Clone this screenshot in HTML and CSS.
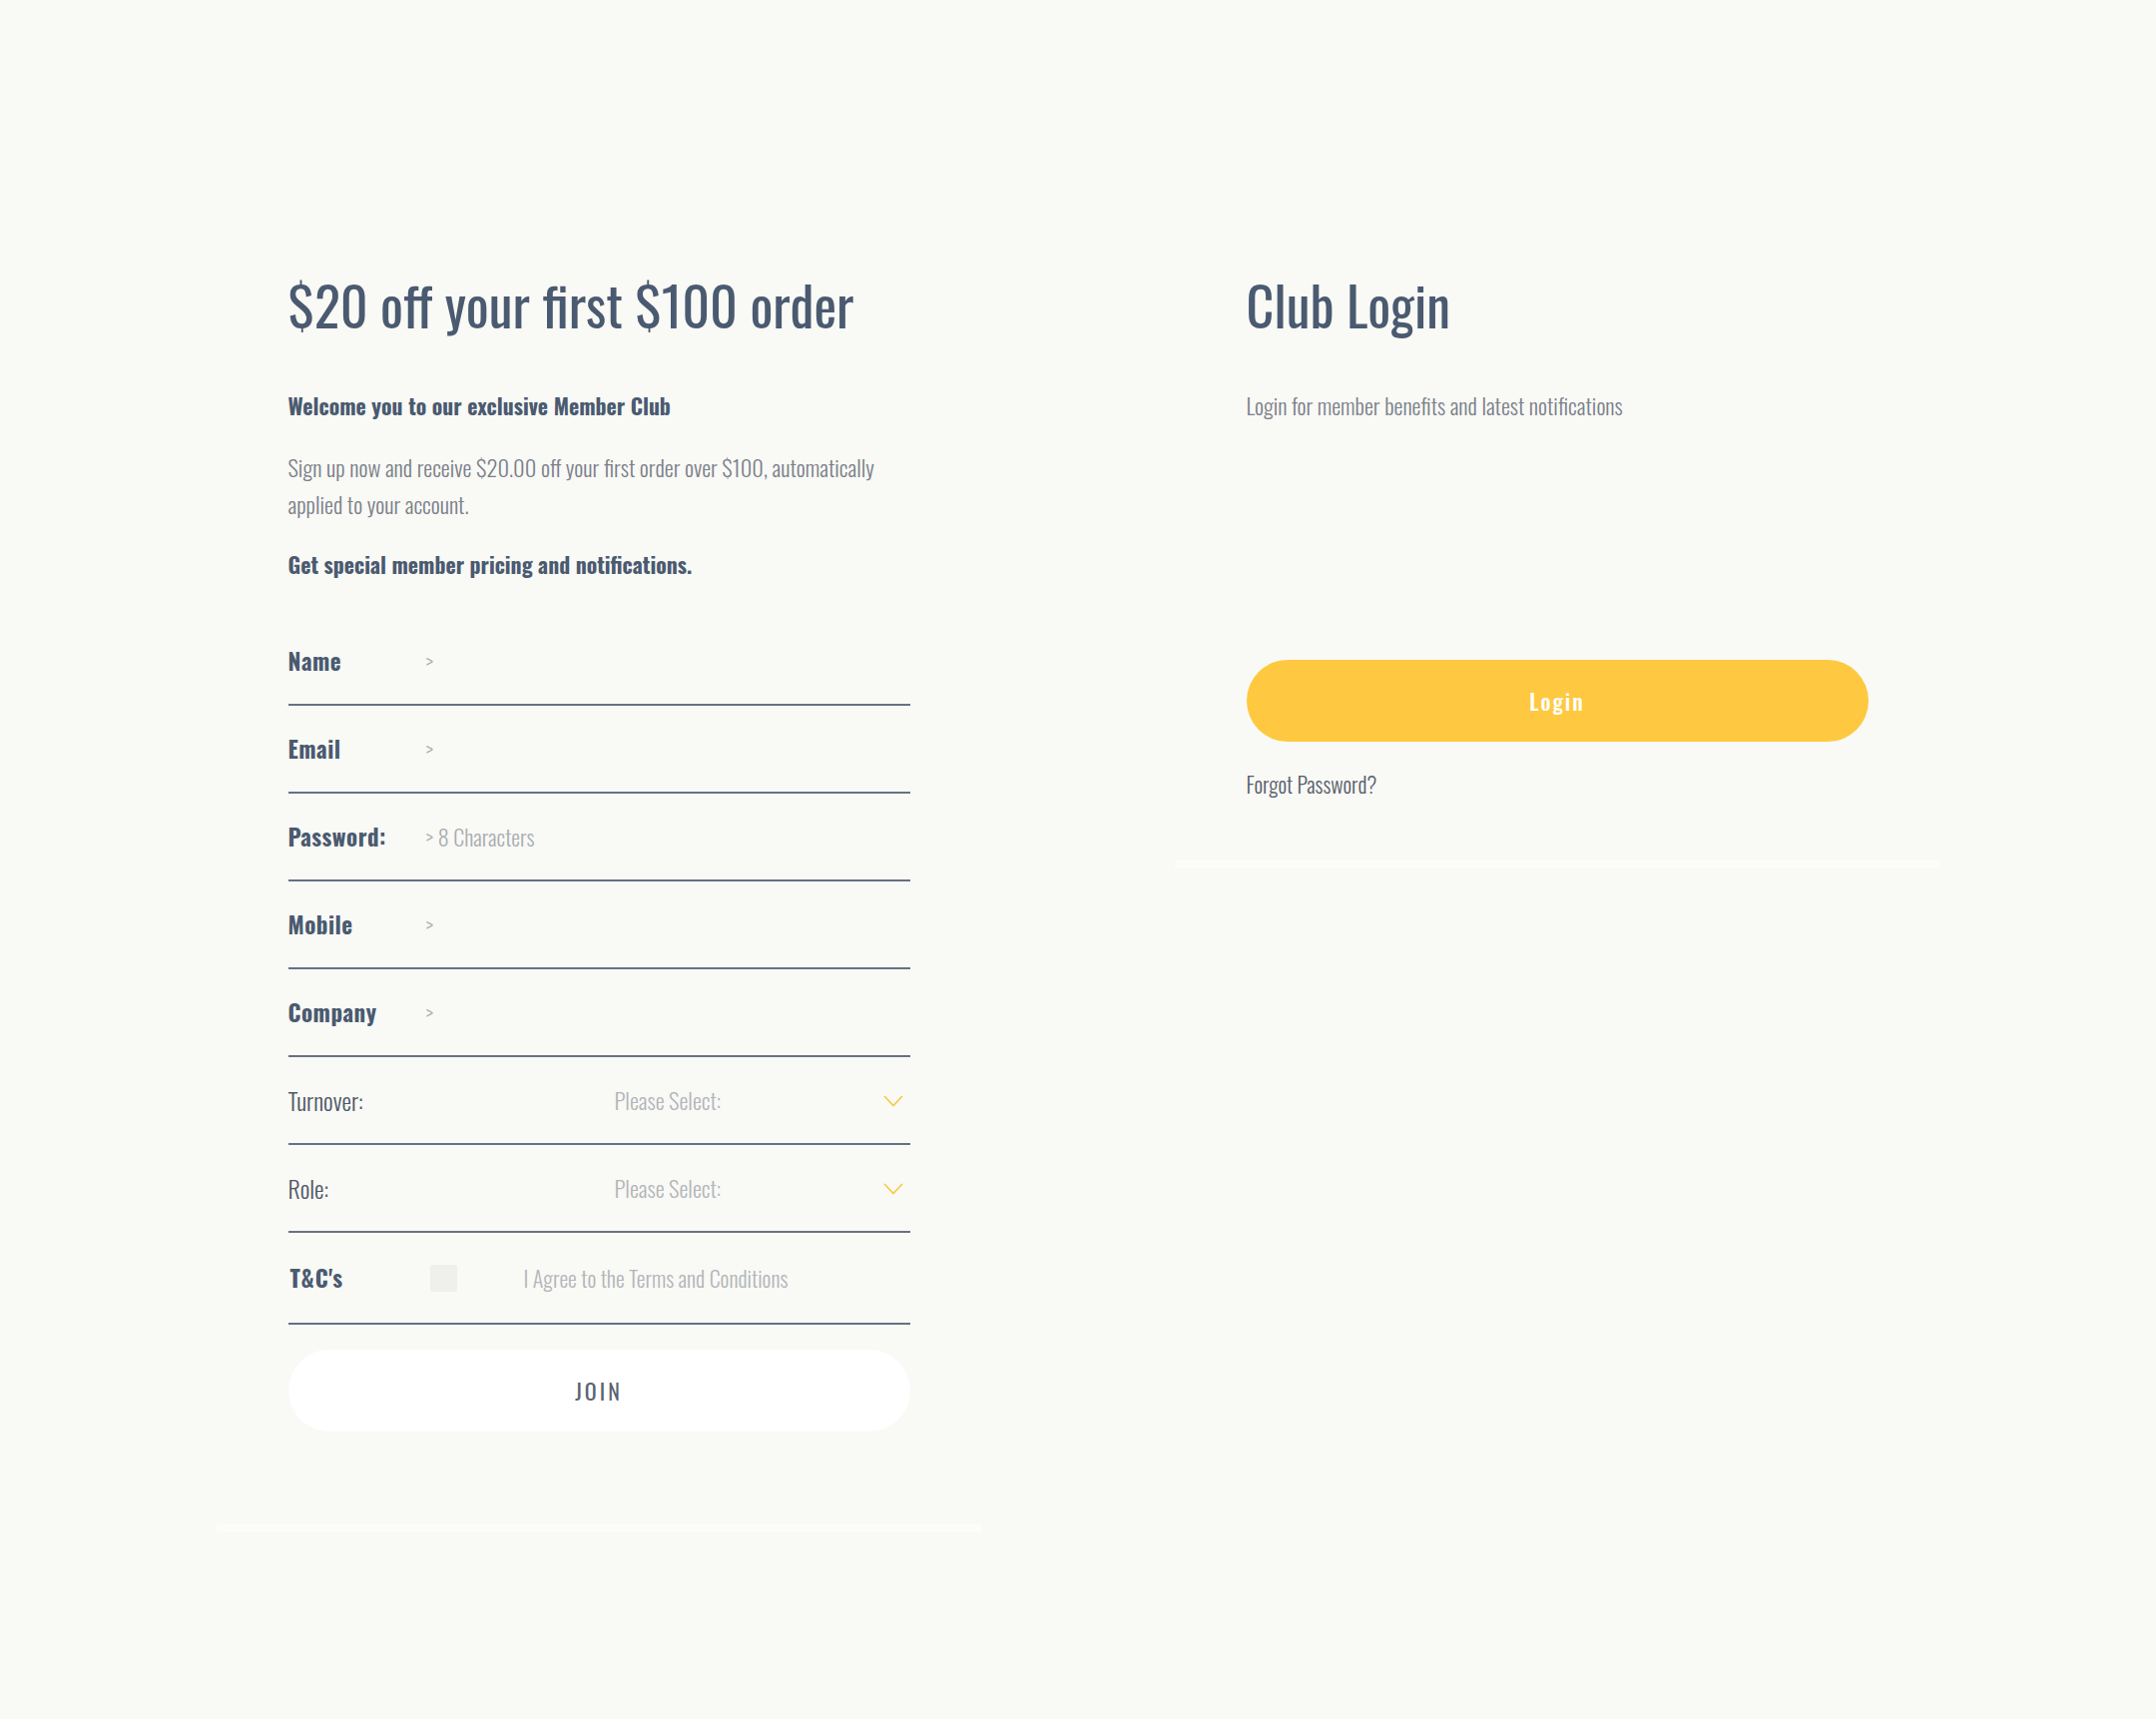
FILE: index.html
```
<!DOCTYPE html>
<html lang="en">
<head>
<meta charset="utf-8">
<title>Member Club</title>
<link rel="stylesheet" href="styles.css">
</head>
<body>
<main class="page">
  <section class="card card-join">
    <h1 class="title">$20 off your first $100 order</h1>
    <p class="lead">Welcome you to our exclusive Member Club</p>
    <p class="text">Sign up now and receive $20.00 off your first order over $100, automatically applied to your account.</p>
    <p class="lead lead-2">Get special member pricing and notifications.</p>

    <form class="form">
      <label class="row">
        <span class="label">Name</span>
        <input class="field" type="text" placeholder="&gt;">
      </label>
      <label class="row">
        <span class="label">Email</span>
        <input class="field" type="email" placeholder="&gt;">
      </label>
      <label class="row">
        <span class="label">Password:</span>
        <input class="field" type="password" placeholder="&gt; 8 Characters">
      </label>
      <label class="row">
        <span class="label">Mobile</span>
        <input class="field" type="tel" placeholder="&gt;">
      </label>
      <label class="row">
        <span class="label">Company</span>
        <input class="field" type="text" placeholder="&gt;">
      </label>
      <label class="row row-select">
        <span class="label label-light">Turnover:</span>
        <span class="select-wrap">
          <select class="select"><option>Please Select:</option></select>
          <svg class="caret" viewBox="0 0 20 12" width="20" height="12"><polyline points="1,1 10,10.5 19,1" fill="none" stroke="#f6c945" stroke-width="1.6"/></svg>
        </span>
      </label>
      <label class="row row-select">
        <span class="label label-light">Role:</span>
        <span class="select-wrap">
          <select class="select"><option>Please Select:</option></select>
          <svg class="caret" viewBox="0 0 20 12" width="20" height="12"><polyline points="1,1 10,10.5 19,1" fill="none" stroke="#f6c945" stroke-width="1.6"/></svg>
        </span>
      </label>
      <label class="row row-terms">
        <span class="label label-terms">T&amp;C's</span>
        <input class="check" type="checkbox">
        <span class="agree">I Agree to the Terms and Conditions</span>
      </label>
      <button class="btn btn-join" type="button">JOIN</button>
    </form>
  </section>

  <section class="card card-login">
    <h1 class="title">Club Login</h1>
    <p class="text text-login">Login for member benefits and latest notifications</p>
    <button class="btn btn-login" type="button">Login</button>
    <a class="forgot" href="#">Forgot Password?</a>
  </section>
</main>
</body>
</html>
```
FILE: styles.css
```
* { box-sizing: border-box; }

html, body {
  margin: 0;
  background: #f9f9f5;
}

body {
  font-family: "Oswald", "Open Sans", sans-serif;
  color: #4a5a70;
}

.page {
  display: flex;
  justify-content: center;
  align-items: flex-start;
  gap: 193px;
  padding-top: 273px;
}

.card {
  width: 767px;
  padding: 0 72px;
  border-bottom: 8px solid #fcfcfa;
}

.card-join { padding-bottom: 93px; }
.card-login { padding-bottom: 62px; }

.title {
  margin: 0;
  font-size: 54px;
  font-weight: 400;
  line-height: 65px;
  letter-spacing: 0;
  color: #4a5a70;
}

.lead {
  margin: 52px 0 0;
  font-size: 21.75px;
  font-weight: 700;
  line-height: 33px;
  color: #4a5a70;
}

.text {
  margin: 27px 0 0;
  font-size: 22.5px;
  font-weight: 300;
  line-height: 37px;
  color: #7b818b;
}

.lead-2 { margin-top: 25px; }

.form {
  margin-top: 37px;
  display: flex;
  flex-direction: column;
}

.row {
  display: flex;
  align-items: center;
  height: 88px;
  border-bottom: 2px solid #687183;
}

.label {
  flex: 0 0 138px;
  font-size: 23px;
  font-weight: 700;
  line-height: 33px;
  letter-spacing: 0.5px;
  color: #4a5a70;
}

.label-light {
  flex-basis: 327px;
  font-size: 24px;
  font-weight: 300;
  letter-spacing: 0;
  color: #4f5868;
}

.field {
  flex: 1;
  min-width: 0;
  border: 0;
  background: transparent;
  padding: 0;
  font-family: inherit;
  font-size: 22px;
  font-weight: 300;
  line-height: 33px;
  color: #4a5a70;
  outline: none;
}

.field::placeholder { color: #a9adb4; }

.select-wrap {
  position: relative;
  flex: 1;
  display: flex;
  align-items: center;
}

.select {
  appearance: none;
  -webkit-appearance: none;
  width: 100%;
  border: 0;
  background: transparent;
  padding: 0;
  font-family: inherit;
  font-size: 22.5px;
  font-weight: 300;
  line-height: 33px;
  color: #b2b5ba;
  outline: none;
}

.caret {
  position: absolute;
  right: 7px;
  top: 50%;
  margin-top: -5px;
}

.row-terms { height: 92px; }

.label-terms {
  flex-basis: 142px;
  padding-left: 2px;
  letter-spacing: 1px;
}

.check {
  appearance: none;
  -webkit-appearance: none;
  margin: 0 67px 0 0;
  width: 27px;
  height: 27px;
  border-radius: 3px;
  background: #efefeb;
  border: 0;
}

.agree {
  font-size: 22px;
  font-weight: 300;
  line-height: 33px;
  color: #b2b5ba;
}

.btn {
  display: block;
  width: 100%;
  height: 82px;
  border: 0;
  border-radius: 41px;
  font-family: inherit;
  font-size: 22px;
  line-height: 82px;
  padding: 0;
  cursor: pointer;
}

.btn-join {
  margin-top: 25px;
  background: #ffffff;
  color: #5b6474;
  font-weight: 400;
  letter-spacing: 3px;
}

.text-login { margin-top: 52px; line-height: 33px; }

.btn-login {
  margin-top: 238px;
  background: #fec940;
  color: #ffffff;
  font-weight: 500;
  letter-spacing: 2px;
}

.forgot {
  display: block;
  margin-top: 27px;
  font-size: 21.5px;
  font-weight: 300;
  line-height: 30px;
  color: #555d6b;
  text-decoration: none;
}
```
